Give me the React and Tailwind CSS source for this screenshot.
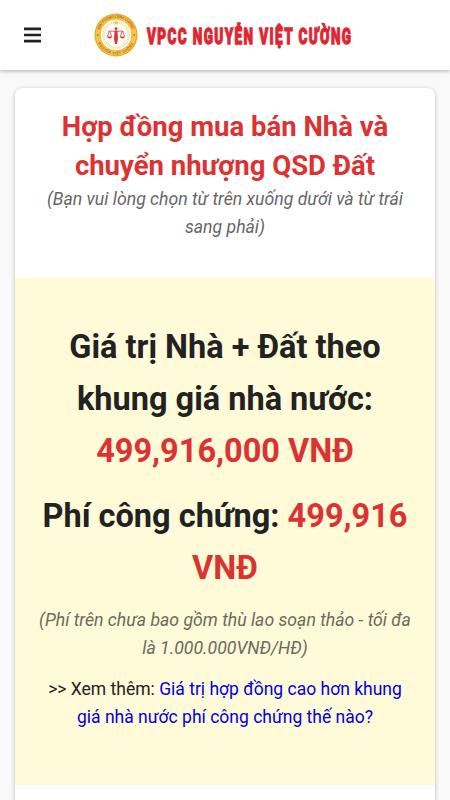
import React from "react";

function Emblem() {
  return (
    <svg viewBox="0 0 44 44" className="h-11 w-11 shrink-0">
      <defs>
        <path id="ringTop" d="M4.800 22a17.200 17.200 0 0 1 34.400 0" />
        <path id="ringBottom" d="M2.500 22a19.500 19.500 0 0 0 39 0" />
      </defs>
      <circle cx="22" cy="22" r="21.5" fill="#dfa22a" />
      <circle cx="22" cy="22" r="20.5" fill="#f5c740" />
      <circle cx="22" cy="22" r="15.9" fill="#fffdf5" stroke="#e0a02c" strokeWidth="0.7" />
      <circle cx="22" cy="22" r="12.6" fill="none" stroke="#ecdc96" strokeWidth="2.6" strokeDasharray="1 1" />
      <g fill="#c9621f" fontFamily="Roboto, sans-serif" fontWeight="700" fontSize="3.6">
        <text><textPath href="#ringTop" startOffset="5" textLength="43">VĂN PHÒNG CÔNG CHỨNG</textPath></text>
        <text><textPath href="#ringBottom" startOffset="8" textLength="44">NGUYỄN VIỆT CƯỜNG</textPath></text>
      </g>
      <circle cx="3.8" cy="22" r="0.8" fill="#c14a20" />
      <circle cx="40.2" cy="22" r="0.8" fill="#c14a20" />
      <path d="M22 7l.8 1.8 2 .1-1.6 1.2.6 1.9-1.8-1.1-1.8 1.1.6-1.9-1.6-1.2 2-.1z" fill="#f0cc43" />
      <path d="M14.500 18.500c2.500-1.500 5 .8 7.500-.5 2.500 1.300 5-1 7.500.5M15.300 18.300l-2 5.500M15.800 18.300l2 5.500M28.200 18.300l-2 5.500M28.700 18.300l2 5.500" fill="none" stroke="#d9363b" strokeWidth="0.800" />
      <path d="M13 23.500h5.200q-.7 2-2.600 2t-2.600-2zM25.800 23.500h5.200q-.7 2-2.600 2t-2.600-2zM20.600 17.500h2.800l.6 8-1 5.500h-2l-1-5.500z" fill="#d9363b" />
      <circle cx="22" cy="15.700" r="1.400" fill="#d9363b" />
    </svg>
  );
}

function Header() {
  return (
    <header className="relative flex h-[70px] items-center bg-white pl-6 shadow-[0_1px_4px_rgba(0,0,0,0.3)]">
      <button aria-label="Menu">
        <svg viewBox="0 0 17 16" className="block h-4 w-[17px]" fill="#222">
          <rect y="0.500" width="17" height="2.700" rx="0.300" />
          <rect y="6.700" width="17" height="2.600" rx="0.300" />
          <rect y="12.800" width="17" height="2.700" rx="0.300" />
        </svg>
      </button>
      <a className="ml-[53px] flex items-center gap-2">
        <Emblem />
        <svg viewBox="0 0 212 44" className="h-11 w-[212px]">
          <text transform="translate(1 30.500) scale(0.6 1)" textLength="340" lengthAdjust="spacing" fill="#df2630" stroke="#df2630" strokeWidth="1.300" fontFamily="Roboto, sans-serif" fontWeight="900" fontSize="22.500">
            VPCC NGUYỄN VIỆT CƯỜNG
          </text>
        </svg>
      </a>
    </header>
  );
}

export default function App() {
  return (
    <div className="h-[800px] overflow-hidden bg-[#f9f9f9] font-['Roboto',sans-serif] text-[#222]">
      <Header />
      <main className="mx-[15px] mt-[18px] h-[760px] rounded-lg bg-white pt-[19px] text-center shadow-[0_1px_4px_rgba(0,0,0,0.25)]">
        <section className="h-[171px] px-5">
          <h1 className="text-[27.500px] leading-[39px] font-bold text-[#dc3232]">Hợp đồng mua bán Nhà và chuyển nhượng QSD Đất</h1>
          <p className="text-[17.650px] leading-[28px] text-[#666] italic">(Bạn vui lòng chọn từ trên xuống dưới và từ trái sang phải)</p>
        </section>
        <section className="h-[507px] bg-[#fffad8] px-5 pt-[43px]">
          <h2 className="text-[32.500px] leading-[52px] font-bold">
            Giá trị Nhà + Đất theo khung giá nhà nước: <span className="text-[#dc3232]">499,916,000 VNĐ</span>
          </h2>
          <h2 className="mt-[13px] text-[32.500px] leading-[52px] font-bold">
            Phí công chứng: <span className="text-[#dc3232]">499,916 VNĐ</span>
          </h2>
          <p className="mt-3 text-[17.650px] leading-[28px] text-[#6b6a5c] italic">(Phí trên chưa bao gồm thù lao soạn thảo - tối đa là 1.000.000VNĐ/HĐ)</p>
          <p className="mt-[13px] text-[17.500px] leading-[28px]">
            &gt;&gt; Xem thêm: <a className="text-[#0000e0]">Giá trị hợp đồng cao hơn khung giá nhà nước phí công chứng thế nào?</a>
          </p>
        </section>
      </main>
    </div>
  );
}
